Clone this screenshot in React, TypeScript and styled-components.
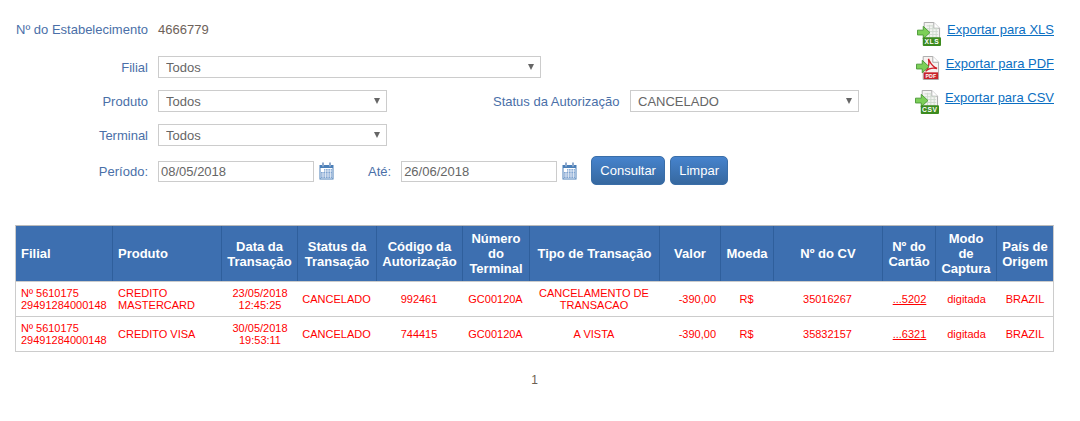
import React from "react";
import styled, { createGlobalStyle } from "styled-components";

const Global = createGlobalStyle`
  html, body { margin: 0; padding: 0; background: #fff; }
  body { font-family: "Liberation Sans", Arial, sans-serif; font-size: 13px; }
`;
const Page = styled.div`
  width: 1080px;
  box-sizing: border-box;
  padding: 0 26px 0 15px;
`;
const Top = styled.div`
  display: flex;
  justify-content: space-between;
  align-items: flex-start;
  padding-top: 12px;
`;
const Form = styled.form`
  display: flex;
  flex-direction: column;
`;
const Row = styled.div<{ $h?: number; $mb?: number }>`
  display: flex;
  align-items: center;
  gap: 10px;
  height: ${(p) => p.$h ?? 34}px;
  margin-bottom: ${(p) => p.$mb ?? 0}px;
`;
const Label = styled.label`
  width: 133px;
  flex: none;
  text-align: right;
  color: #4a6fa8;
  line-height: 15px;
`;
const InlineLabel = styled.label<{ $ml: number; $w?: number }>`
  flex: none;
  margin-left: ${(p) => p.$ml}px;
  width: ${(p) => (p.$w ? `${p.$w}px` : "auto")};
  color: #4a6fa8;
  line-height: 15px;
  white-space: nowrap;
`;
const Value = styled.span`
  color: #6e6259;
  line-height: 15px;
`;
const SelectWrap = styled.div<{ $w: number }>`
  position: relative;
  flex: none;
  width: ${(p) => p.$w}px;
  height: 22px;
  &::after {
    content: "";
    position: absolute;
    right: 7px;
    top: 8px;
    border-left: 3px solid transparent;
    border-right: 3px solid transparent;
    border-top: 6px solid #666;
  }
`;
const Select = styled.select`
  appearance: none;
  display: block;
  width: 100%;
  height: 100%;
  box-sizing: border-box;
  margin: 0;
  padding: 0 0 0 7px;
  border: 1px solid #ccc;
  border-radius: 0;
  background: #fff;
  color: #666;
  font: 13px "Liberation Sans", Arial, sans-serif;
`;
const DateGroup = styled.div`
  display: flex;
  align-items: center;
  gap: 5px;
`;
const DateInput = styled.input`
  width: 156px;
  height: 21px;
  box-sizing: border-box;
  margin: 0;
  padding: 0 2px;
  border: 1px solid #ccc;
  color: #666;
  font: 13px "Liberation Sans", Arial, sans-serif;
`;
const Actions = styled.div`
  display: flex;
  gap: 5px;
  margin-left: 4px;
  margin-top: -1px;
`;
const Button = styled.button<{ $w: number }>`
  width: ${(p) => p.$w}px;
  height: 29px;
  padding: 0;
  border: 1px solid #3a6ea8;
  border-radius: 5px;
  background: linear-gradient(#4683cd, #36689f);
  color: #fff;
  font: 13px "Liberation Sans", Arial, sans-serif;
`;
const Exports = styled.div`
  display: flex;
  flex-direction: column;
  align-items: flex-end;
`;
const ExportRow = styled.div`
  display: flex;
  align-items: flex-start;
  gap: 6px;
  height: 34px;
`;
const ExportIcon = styled.svg`
  display: block;
  width: 24px;
  height: 24px;
  margin-top: 10px;
`;
const ExportLink = styled.a`
  margin-top: 10px;
  color: #0b6fc2;
  line-height: 15px;
  text-decoration: underline;
`;
const Table = styled.table`
  table-layout: fixed;
  width: 1039px;
  margin-top: 35px;
  border-collapse: separate;
  border-spacing: 0;
  border: 1px solid #ccc;
  border-top-color: #bbb;
`;
const Col = styled.col<{ $w: number }>`
  width: ${(p) => p.$w}px;
`;
const Th = styled.th<{ $left?: boolean }>`
  height: 55px;
  box-sizing: border-box;
  padding: 0 5px;
  background: #3d6fb0;
  color: #fff;
  font-size: 13px;
  font-weight: bold;
  line-height: 15px;
  text-align: ${(p) => (p.$left ? "left" : "center")};
  border-right: 1px solid #2f5f9c;
  &:last-child { border-right: 0; }
`;
const Td = styled.td<{ $align?: string; $nudge?: boolean }>`
  height: 35px;
  box-sizing: border-box;
  padding: 0 ${(p) => (p.$nudge ? "6px" : "5px")} 0 ${(p) => (p.$nudge ? "4px" : "5px")};
  color: #f00;
  font-size: 11px;
  line-height: 12px;
  text-align: ${(p) => p.$align ?? "center"};
  border-top: 1px solid #ccc;
  overflow: hidden;
  white-space: nowrap;
`;
const CardLink = styled.a`
  color: #f00;
  text-decoration: underline;
`;
const Pagination = styled.div`
  width: 1039px;
  margin-top: 21px;
  text-align: center;
  color: #6b5f52;
  font-size: 12px;
  line-height: 15px;
`;
const CalendarSvg = styled.svg`
  display: block;
  width: 15px;
  height: 18px;
`;

const Calendar = () => (
  <CalendarSvg viewBox="0 0 15 18">
    <rect x="0.5" y="3" width="14" height="14.5" fill="#4a7fb8" />
    <rect x="3" y="0.5" width="2" height="4" fill="#8fa9cc" />
    <rect x="10" y="0.5" width="2" height="4" fill="#8fa9cc" />
    <rect x="1.5" y="6" width="12" height="10.5" fill="#fff" />
    <rect x="5" y="7" width="8" height="9" fill="#8fb0d8" />
    <rect x="2" y="10" width="11" height="6" fill="#7fa3d0" />
    <path d="M4 10v6M6.5 7v9M9 7v9M11.5 7v9M2 12h11M2 14h11M5 9h8" stroke="#fff" strokeWidth="0.6" />
  </CalendarSvg>
);

const Sheet = () => (
  <>
    <path d="M7.5 .5h10l6 6v11h-16z" fill="#f4f4f2" stroke="#a9a9a9" />
    <path d="M17.5 .5v6h6" fill="#fff" stroke="#a9a9a9" />
    <path d="M10 4h6M10 7h12M10 10h12M10 13h12M10 16h12M13 3v14M16.5 3v14M20 6v11" stroke="#cfd9cf" strokeWidth="1" />
  </>
);
const Arrow = () => (
  <path d="M.5 8.5h6v-4l7 6.5-7 6.5v-4h-6z" fill="#7ccf58" stroke="#4d9a3a" strokeWidth="1" />
);
const IconLabel = ({ text, fill }: { text: string; fill: string }) => (
  <>
    <rect x="6" y="16" width="19" height="9" rx="1" fill={fill} />
    <text x="15.5" y="23" textAnchor="middle" fontSize="7" fontWeight="bold" fill="#fff" fontFamily="Liberation Sans, Arial, sans-serif" letterSpacing="0.6">{text}</text>
  </>
);
const SheetIcon = ({ text }: { text: string }) => (
  <ExportIcon viewBox="0 0 25 25">
    <Sheet />
    <Arrow />
    <IconLabel text={text} fill="#3c8b1f" />
  </ExportIcon>
);
const PdfIcon = () => (
  <ExportIcon viewBox="0 0 25 25">
    <path d="M7.5 .5h10l6 6v18h-16z" fill="#f6f2f0" stroke="#a9a9a9" />
    <path d="M17.5 .5v6h6" fill="#fff" stroke="#a9a9a9" />
    <path d="M13 3c2 4 3 8 9 10-5-1-9 0-12 3 3-3 4-8 3-13z" fill="none" stroke="#d0202a" strokeWidth="1.4" />
    <Arrow />
    <path d="M8 17h15v7H8z" fill="#c8232c" />
    <text x="15.5" y="23" textAnchor="middle" fontSize="5.5" fontWeight="bold" fill="#fff" fontFamily="Liberation Sans, Arial, sans-serif">PDF</text>
  </ExportIcon>
);

const cols = [97, 109, 76, 79, 86, 67, 130, 61, 53, 109, 53, 61, 56];
const headers: [React.ReactNode, boolean?][] = [
  ["Filial", true],
  ["Produto", true],
  [<>Data da<br />Transação</>],
  [<>Status da<br />Transação</>],
  [<>Código da<br />Autorização</>],
  [<>Número<br />do<br />Terminal</>],
  ["Tipo de Transação"],
  ["Valor"],
  ["Moeda"],
  ["Nº do CV"],
  [<>Nº do<br />Cartão</>],
  [<>Modo<br />de<br />Captura</>],
  [<>País de<br />Origem</>],
];
const rows = [
  { produto: <>CREDITO<br />MASTERCARD</>, data: "23/05/2018", hora: "12:45:25", cod: "992461", tipo: <>CANCELAMENTO DE<br />TRANSACAO</>, cv: "35016267", card: "...5202" },
  { produto: "CREDITO VISA", data: "30/05/2018", hora: "19:53:11", cod: "744415", tipo: "A VISTA", cv: "35832157", card: "...6321" },
];

export default function App() {
  return (
    <Page>
      <Global />
      <Top>
        <Form>
          <Row $mb={4}>
            <Label>Nº do Estabelecimento</Label>
            <Value>4666779</Value>
          </Row>
          <Row>
            <Label>Filial</Label>
            <SelectWrap $w={383}><Select><option>Todos</option></Select></SelectWrap>
          </Row>
          <Row>
            <Label>Produto</Label>
            <SelectWrap $w={229}><Select><option>Todos</option></Select></SelectWrap>
            <InlineLabel $ml={96} $w={127}>Status da Autorização</InlineLabel>
            <SelectWrap $w={229}><Select><option>CANCELADO</option></Select></SelectWrap>
          </Row>
          <Row>
            <Label>Terminal</Label>
            <SelectWrap $w={229}><Select><option>Todos</option></Select></SelectWrap>
          </Row>
          <Row $h={38}>
            <Label>Período:</Label>
            <DateGroup>
              <DateInput defaultValue="08/05/2018" />
              <Calendar />
            </DateGroup>
            <InlineLabel $ml={24}>Até:</InlineLabel>
            <DateGroup>
              <DateInput defaultValue="26/06/2018" />
              <Calendar />
            </DateGroup>
            <Actions>
              <Button type="button" $w={74}>Consultar</Button>
              <Button type="button" $w={58}>Limpar</Button>
            </Actions>
          </Row>
        </Form>
        <Exports>
          <ExportRow><SheetIcon text="XLS" /><ExportLink href="#">Exportar para XLS</ExportLink></ExportRow>
          <ExportRow><PdfIcon /><ExportLink href="#">Exportar para PDF</ExportLink></ExportRow>
          <ExportRow><SheetIcon text="CSV" /><ExportLink href="#">Exportar para CSV</ExportLink></ExportRow>
        </Exports>
      </Top>
      <Table>
        <colgroup>
          {cols.map((w, i) => <Col key={i} $w={w} />)}
        </colgroup>
        <thead>
          <tr>
            {headers.map(([h, left], i) => <Th key={i} $left={left}>{h}</Th>)}
          </tr>
        </thead>
        <tbody>
          {rows.map((r) => (
            <tr key={r.cv}>
              <Td $align="left">Nº 5610175<br />29491284000148</Td>
              <Td $align="left">{r.produto}</Td>
              <Td>{r.data}<br />{r.hora}</Td>
              <Td $nudge>CANCELADO</Td>
              <Td $nudge>{r.cod}</Td>
              <Td $nudge>GC00120A</Td>
              <Td $nudge>{r.tipo}</Td>
              <Td $align="right">-390,00</Td>
              <Td $nudge>R$</Td>
              <Td $nudge>{r.cv}</Td>
              <Td><CardLink href="#">{r.card}</CardLink></Td>
              <Td>digitada</Td>
              <Td>BRAZIL</Td>
            </tr>
          ))}
        </tbody>
      </Table>
      <Pagination>1</Pagination>
    </Page>
  );
}
